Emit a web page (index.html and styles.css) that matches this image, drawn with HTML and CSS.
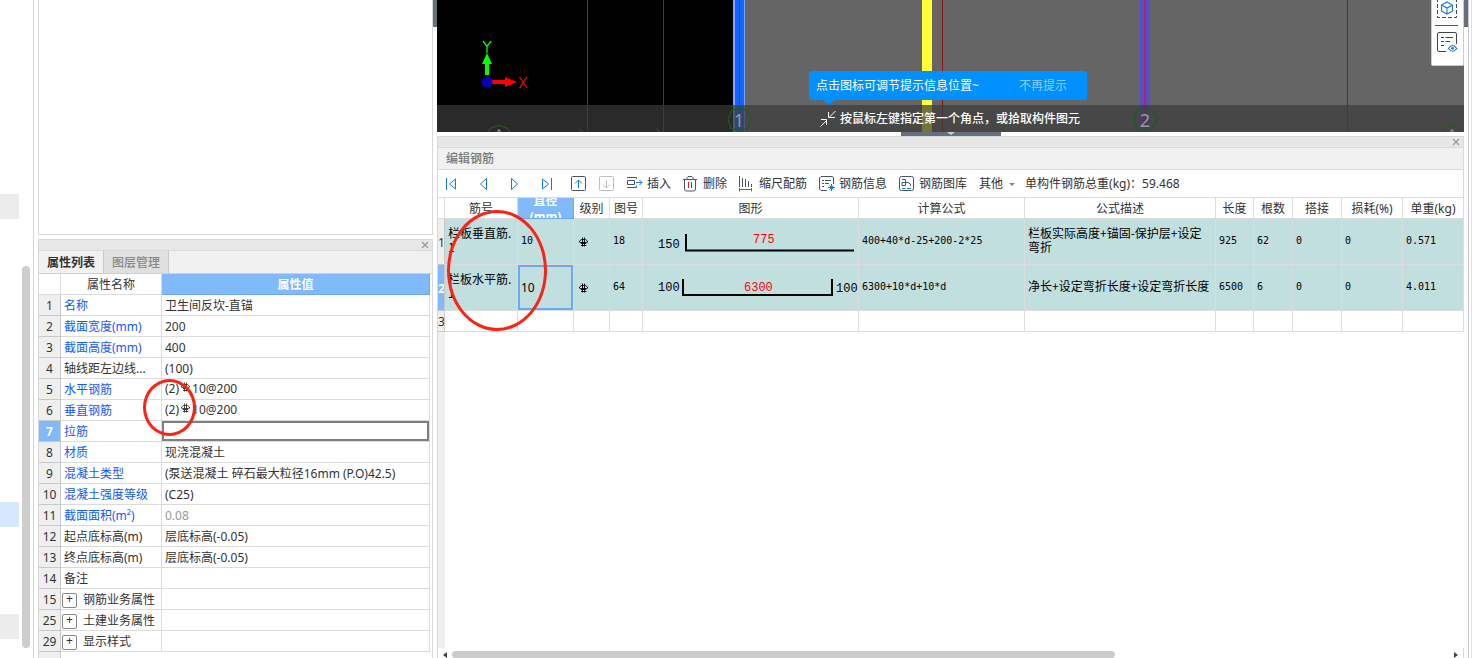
FILE: index.html
```html
<!DOCTYPE html>
<html lang="zh-CN">
<head>
<meta charset="utf-8">
<title>编辑钢筋</title>
<link rel="stylesheet" href="styles.css">
</head>
<body>
<svg class="defs" aria-hidden="true">
  <symbol id="rebar" viewBox="0 0 10 11"><path d="M3.500 0.500V9.500M5.500 0.500V9.500M2 8.500H7.500M1.500 5.500H7.500M2.500 2.500H6.500L8.500 4V5L7 6.500H2L0.500 5V4Z" fill="none" stroke="currentColor" stroke-width=".9"/></symbol>
  <symbol id="close" viewBox="0 0 8 8"><path d="M1 1L7 7M7 1L1 7" fill="none" stroke="currentColor" stroke-width="1.2"/></symbol>
</svg>

<aside class="gutter">
  <div class="tree"><i class="mark"></i><i class="mark active"></i><i class="mark"></i></div>
  <div class="vscroll"></div>
</aside>

<section class="side">
  <div class="blank-box"></div>
  <div class="dock props-dock">
    <div class="grip"><button class="close" aria-label="关闭"><svg><use href="#close"/></svg></button></div>
    <div class="tabs" role="tablist">
      <button class="tab selected" role="tab" aria-selected="true">属性列表</button>
      <button class="tab" role="tab" aria-selected="false">图层管理</button>
    </div>
    <div class="props-body">
      <table class="props">
        <colgroup><col class="p-num"><col class="p-name"><col></colgroup>
        <thead><tr><th class="corner"></th><th>属性名称</th><th class="hot">属性值</th></tr></thead>
        <tbody>
          <tr><th>1</th><td class="link">名称</td><td>卫生间反坎-直锚</td></tr>
          <tr><th>2</th><td class="link">截面宽度(mm)</td><td>200</td></tr>
          <tr><th>3</th><td class="link">截面高度(mm)</td><td>400</td></tr>
          <tr><th>4</th><td>轴线距左边线...</td><td>(100)</td></tr>
          <tr><th>5</th><td class="link">水平钢筋</td><td class="spec">(2)<svg class="rebar"><use href="#rebar"/></svg>10@200</td></tr>
          <tr><th>6</th><td class="link">垂直钢筋</td><td class="spec">(2)<svg class="rebar"><use href="#rebar"/></svg>10@200</td></tr>
          <tr class="current"><th>7</th><td class="link"><label for="tie">拉筋</label></td><td class="edit"><input id="tie" type="text" value=""></td></tr>
          <tr><th>8</th><td class="link">材质</td><td>现浇混凝土</td></tr>
          <tr><th>9</th><td class="link">混凝土类型</td><td>(泵送混凝土 碎石最大粒径16mm (P.O)42.5)</td></tr>
          <tr><th>10</th><td class="link">混凝土强度等级</td><td>(C25)</td></tr>
          <tr><th>11</th><td class="link">截面面积(m²)</td><td class="muted">0.08</td></tr>
          <tr><th>12</th><td>起点底标高(m)</td><td>层底标高(-0.05)</td></tr>
          <tr><th>13</th><td>终点底标高(m)</td><td>层底标高(-0.05)</td></tr>
          <tr><th>14</th><td>备注</td><td></td></tr>
          <tr><th>15</th><td class="group"><button class="expand">钢筋业务属性</button></td><td></td></tr>
          <tr><th>25</th><td class="group"><button class="expand">土建业务属性</button></td><td></td></tr>
          <tr><th>29</th><td class="group"><button class="expand">显示样式</button></td><td></td></tr>
        </tbody>
      </table>
    </div>
  </div>
</section>

<div class="splitter"></div>

<main class="work">
  <div class="canvas">
    <svg class="scene">
      <rect width="100%" height="132" fill="#000"/>
      <rect x="302" width="100%" height="132" fill="#656565"/>
      <g fill="#0a6a0a"><rect x="150" width="1" height="132"/><rect x="226" width="1" height="132"/></g>
      <rect x="296" width="12" height="132" fill="#7aa5ff"/>
      <rect x="298" width="9" height="132" fill="#1464ff"/>
      <rect x="302" width="1" height="132" fill="#c01048"/>
      <rect x="485" width="10" height="132" fill="#ffff33"/>
      <rect x="505" width="1" height="132" fill="#8c1414"/>
      <rect x="703" width="10" height="132" fill="#5050c8"/>
      <rect x="707" width="2" height="132" fill="#b42060"/>
      <rect x="910" width="1" height="132" fill="#6e2626"/>
      <path d="M50 75V62" stroke="#0f0" stroke-width="4"/>
      <path d="M50 53L55 64H45Z" fill="#0f0"/>
      <path d="M46 41L50 46.500L54 41M50 46V53" fill="none" stroke="#0f0" stroke-width="1.300"/>
      <path d="M54 82H68" stroke="#f00" stroke-width="4"/>
      <path d="M80 82L68 87V77Z" fill="#f00"/>
      <path d="M82.500 77L90 88M90 77L82.500 88" fill="none" stroke="#f00" stroke-width="1.300"/>
      <circle cx="50" cy="82" r="5.500" fill="#0000b4"/>
    </svg>
    <div class="hint">
      <svg class="axes">
        <g fill="none" stroke="#235823" stroke-width="1.200">
          <path d="M291 14.500L294.500 6L302.500 2.500L310.500 6L314.500 14.500L311 23L302.500 26.500L294 23Z"/>
          <path d="M697 14.500L700 6L708 2.500L716 6L720 14.500L716 23L708 26.500L700 23Z"/>
          <path d="M51 27L54 23L62 20.500L70 23L73 27M142 24L146 27M219 24L223 27M1005 27L1008 23L1015 20.500L1022 23L1025 27"/>
        </g>
        <g class="axis-name"><text x="302" y="22">1</text><text x="708" y="22">2</text></g>
        <path d="M61 27V25H63V27M1014 27V25H1016V27" stroke="#999" fill="none"/>
      </svg>
      <button class="hint-text"><svg viewBox="0 0 16 16"><path d="M15.500 0L9 6.500M8.500 1V6.500H15M.5 15.500L6.500 9.500M1 8.500H6.500V14" fill="none" stroke="#fff"/></svg>按鼠标左键指定第一个角点，或拾取构件图元</button>
    </div>
    <div class="tip"><span>点击图标可调节提示信息位置~</span><button>不再提示</button></div>
    <div class="palette">
      <button aria-label="三维"><svg viewBox="0 0 22 22"><path d="M1.500 0V19.500H20.500V0" fill="none" stroke="#3c4658" stroke-dasharray="4 2"/><path d="M11 4L16.500 7V13L11 16L5.500 13V7ZM5.500 7L11 10L16.500 7M11 10V16" fill="none" stroke="#1677e8" stroke-width="1.100"/></svg></button>
      <hr>
      <button aria-label="显示设置"><svg viewBox="0 0 22 22"><path d="M20.500 13V3Q20.500 1.500 19 1.500H3Q1.500 1.500 1.500 3V19Q1.500 20.500 3 20.500H10M5 6.500H8M9.500 6.500H17M5 10.500H8M9.500 10.500H14M5 14.500H8" fill="none" stroke="#3c4658" stroke-width="1"/><path d="M12.500 17.500Q16.500 11.500 20.800 17.500Q16.500 23 12.500 17.500Z" fill="none" stroke="#1677e8" stroke-width="1.200"/><circle cx="16.600" cy="17.300" r="1.400" fill="#1677e8"/></svg></button>
    </div>
  </div>
  <div class="handle-row"><i class="handle"></i></div>

  <section class="dock rebar-dock">
    <div class="grip"><button class="close" aria-label="关闭"><svg><use href="#close"/></svg></button></div>
    <h2>编辑钢筋</h2>
    <div class="toolbar">
      <div class="nav">
        <button aria-label="首行"><svg viewBox="0 0 16 16"><path d="M3.500 2V14M12.500 3V13L6.500 8Z"/></svg></button>
        <button aria-label="上一行"><svg viewBox="0 0 16 16"><path d="M11.500 2.500V13.500L5.500 8Z"/></svg></button>
        <button aria-label="下一行"><svg viewBox="0 0 16 16"><path d="M4.500 2.500V13.500L10.500 8Z"/></svg></button>
        <button aria-label="末行"><svg viewBox="0 0 16 16"><path d="M12.500 2V14M3.500 3V13L9.500 8Z"/></svg></button>
      </div>
      <div class="tools">
        <button aria-label="上移"><svg viewBox="0 0 16 16"><rect class="ink" x=".5" y=".5" width="14" height="14" rx="1"/><path d="M7.500 12V4M4 7.500L7.500 4L11 7.500"/></svg></button>
        <button aria-label="下移" disabled><svg viewBox="0 0 16 16"><rect class="off" x=".5" y=".5" width="14" height="14" rx="1"/><path class="off" d="M7.500 4V12M4 8.500L7.500 12L11 8.500"/></svg></button>
        <button><svg viewBox="0 0 16 16"><path class="ink" d="M0 1.500H9.500V3M0 11.500H9.500V9.500M.5 4.500H7.500V8.500H.5Z"/><path d="M9 6.500H15M12.500 4L15 6.500L12.500 9"/></svg>插入</button>
        <button><svg viewBox="0 0 16 16"><path class="ink" d="M0 3.500H14M4 3V1.500L5 .5H9L10 1.500V3M1.500 3.500V13Q1.500 15 3.500 15H10.500Q12.500 15 12.500 13V3.500"/><path class="warn" d="M5.500 6V12M8.500 6V12"/></svg>删除</button>
        <button><svg viewBox="0 0 16 16"><path class="ink" d="M.5 0V11M3.500 2V11M6.500 3V11M9.500 5V11M12.500 8V11"/><path d="M.5 12V15.500M12.500 12V15.500M.5 13.500H12.500"/></svg>缩尺配筋</button>
        <button><svg viewBox="0 0 16 16"><path class="ink" d="M14.500 8V2L13.500 .5H2L.5 2V13L2 14.500H8M3 4.500H5M6 4.500H12M3 7.500H5M6 7.500H10M3 10.500H5"/><path d="M12.500 8V15M9 11.500H16M10.500 9.500L14.500 13.500M14.500 9.500L10.500 13.500"/></svg>钢筋信息</button>
        <button><svg viewBox="0 0 16 16"><rect class="ink" x=".5" y=".5" width="14" height="14" rx="2"/><path class="ink" d="M3 3.500H6.500V9.500H3V6.500H9L11.500 8V10"/><path d="M3 12.500H6.500M8 12.500H12"/></svg>钢筋图库</button>
        <button class="more">其他<i class="caret"></i></button>
      </div>
      <span class="total">单构件钢筋总重(kg)：59.468</span>
    </div>
    <div class="grid-body">
      <table class="bars">
        <colgroup><col class="w7"><col class="w73"><col class="w56"><col class="w36"><col class="w33"><col class="w216"><col class="w166"><col><col class="w38"><col class="w39"><col class="w49"><col class="w61"><col class="w61"></colgroup>
        <thead><tr><th></th><th>筋号</th><th class="hot"><div class="two">直径<br>(mm)</div></th><th>级别</th><th>图号</th><th>图形</th><th>计算公式</th><th>公式描述</th><th>长度</th><th>根数</th><th>搭接</th><th>损耗(%)</th><th>单重(kg)</th></tr></thead>
        <tbody>
          <tr class="fill"><th>1</th><td class="cjk name">栏板垂直筋.<br>1</td><td>10</td><td><svg class="rebar"><use href="#rebar"/></svg></td><td>18</td>
            <td class="shape"><svg class="figure"><path d="M43 15V31.500H211" /><text x="15" y="29">150</text><text class="red" x="110" y="24">775</text></svg></td>
            <td>400+40*d-25+200-2*25</td><td class="cjk">栏板实际高度+锚固-保护层+设定弯折</td><td>925</td><td>62</td><td>0</td><td>0</td><td>0.571</td></tr>
          <tr class="fill current"><th>2</th><td class="cjk name">栏板水平筋.<br>1</td><td class="edit"><input type="text" value="10" aria-label="直径(mm)"></td><td><svg class="rebar"><use href="#rebar"/></svg></td><td>64</td>
            <td class="shape"><svg class="figure"><path d="M40 14V30H189V14"/><text x="15" y="26">100</text><text class="red" x="101" y="26">6300</text><text x="193" y="27">100</text></svg></td>
            <td>6300+10*d+10*d</td><td class="cjk">净长+设定弯折长度+设定弯折长度</td><td>6500</td><td>6</td><td>0</td><td>0</td><td>4.011</td></tr>
          <tr class="empty"><th>3</th><td></td><td></td><td></td><td></td><td></td><td></td><td></td><td></td><td></td><td></td><td></td><td></td></tr>
        </tbody>
      </table>
    </div>
    <div class="hscroll"><i class="arrow left"></i><div class="track"><i class="thumb"></i></div><i class="arrow right"></i></div>
  </section>
</main>

<div class="splitter edge"></div>
<div class="margin"></div>

<i class="ring ring-table"></i>
<i class="ring ring-props"></i>
</body>
</html>
```

FILE: styles.css
```css
* { box-sizing: border-box; }
html, body { height: 100%; }
body {
  margin: 0;
  display: flex;
  position: relative;
  overflow: hidden;
  background: #fff;
  color: #333;
  font: 12px/16px "Noto Sans", "Noto Sans CJK SC", sans-serif;
}
button, input { font: inherit; color: inherit; margin: 0; padding: 0; border: 0; background: none; border-radius: 0; }
table { border-collapse: separate; border-spacing: 0; table-layout: fixed; width: 100%; }
th { font-weight: normal; }
.defs { position: absolute; width: 0; height: 0; }
.rebar { width: 10px; height: 11px; }

/* left edge strip */
.gutter { flex: 0 0 34px; display: flex; gap: 3px; border-right: 1px solid #d4d4d4; }
.tree { width: 19px; }
.mark { display: block; height: 25px; background: #ececec; margin-top: 87px; }
.mark:first-child { margin-top: 194px; }
.mark.active { margin-top: 283px; background: #d5e8ff; }
.vscroll { width: 8px; height: 382px; margin-top: 266px; border-radius: 4px; background: #cdcdcd; }

/* property panel */
.side { flex: 0 0 395px; margin-left: 4px; display: flex; flex-direction: column; gap: 4px; }
.blank-box { flex: 0 0 235px; border: 1px solid #d9d9d9; border-top: 0; }
.dock { display: flex; flex-direction: column; border: 1px solid #d9d9d9; border-bottom: 0; min-height: 0; }
.props-dock { flex: 1; }
.grip { flex: none; height: 11px; background: #e7e7e7; border-bottom: 1px solid #d9d9d9; display: flex; justify-content: flex-end; align-items: center; padding-right: 3px; }
.close { display: flex; color: #999; }
.close svg { width: 8px; height: 8px; }
.tabs { display: flex; background: #f1f1f1; height: 23px; border-bottom: 1px solid #d0d0d4; }
.tab { width: 65px; padding-top: 2px; color: #888; font-weight: 500; background: #e0e0e0; border-right: 1px solid #c8c8cc; }
.tab.selected { color: #333; font-weight: bold; background: #f1f1f1; }
.props-body { flex: 1; padding-right: 2px; background: linear-gradient(to right, #efefef 21px, #c8c8c8 21px, #c8c8c8 22px, #fff 22px); }
.p-num { width: 22px; }
.p-name { width: 101px; }
.props th, .props td { height: 21px; padding: 2px 0 0; border-right: 1px solid #dcdcdc; border-bottom: 1px solid #dcdcdc; white-space: nowrap; background: #fff; }
.props td { padding-left: 3px; }
.props tbody th { background: #efefef; border-color: #c8c8c8; }
.props .corner { border-color: #dcdcdc; }
.props .hot, .bars .hot { background: #80bafa; border-color: #6aa9ee; color: #fff; font-weight: bold; }
.props .link { color: #1459ff; }
.props .muted { color: #999; }
.props .current th { background: #80bafa; color: #fff; font-weight: bold; }
.props .rebar { margin: 0 1px 0 2px; vertical-align: 0; }
.props .spec { padding-top: 0; }
.props .edit { padding: 0; }
.props .group { padding-left: 2px; }
.edit input { display: block; width: 100%; outline: 0; }
.props .edit input { height: 20px; border: 2px solid #7f7f7f; }
.expand { display: flex; align-items: center; gap: 6px; }
.expand::before { content: "+"; width: 13px; height: 13px; border: 1px solid #888; border-radius: 2px; line-height: 10px; font-size: 12px; }
.props .expand { margin-left: -1px; }

/* splitters */
.splitter { flex: 0 0 4px; background: linear-gradient(#66707d, #66707d) no-repeat 0 0 / 4px 27px; }
.margin { flex: 0 0 4px; border-left: 1px solid #c4c6cc; border-right: 1px solid #e0e0e0; }

/* drawing canvas */
.work { flex: 1; min-width: 0; display: flex; flex-direction: column; }
.canvas { flex: 0 0 132px; position: relative; overflow: hidden; }
.scene, .axes { position: absolute; inset: 0; width: 100%; height: 100%; }
.hint { position: absolute; left: 0; right: 0; bottom: 0; height: 27px; background: rgba(59, 59, 59, .71); display: flex; padding-left: 383px; }
.axis-name { fill: #999; font-size: 18px; text-anchor: middle; }
.hint-text { position: relative; display: flex; align-items: center; gap: 4px; color: #fff; font-weight: 500; }
.hint-text svg { width: 16px; height: 16px; }
.tip { position: absolute; left: 372px; top: 71px; width: 278px; height: 29px; border-radius: 3px; background: #0090ff; color: #fff; display: flex; align-items: center; justify-content: space-between; padding: 1px 20px 0 7px; }
.tip::after { content: ""; position: absolute; left: 14px; top: 29px; border: 6px solid transparent; border-top: 5px solid #0090ff; border-bottom: 0; }
.tip button { color: #8cccff; }
.palette { position: absolute; right: 0; top: 0; width: 33px; height: 66px; background: #fff; border: 1px solid #ccc; border-top: 0; border-radius: 0 0 2px 2px; display: flex; flex-direction: column; align-items: center; padding-right: 2px; }
.palette button, .palette svg { display: block; width: 22px; height: 22px; }
.palette button:first-child { margin-top: -2px; }
.palette hr { width: 23px; margin: 5px 0 5px; border: 0; border-top: 1px solid #555; }
.handle-row { flex: 0 0 4px; display: flex; justify-content: center; }
.handle { width: 100px; background: #66707d; display: flex; justify-content: center; }
.handle::after { content: ""; border: 4px solid transparent; border-top: 3px solid #ccd0d6; border-bottom: 0; }

/* rebar editor */
.rebar-dock { flex: 1; }
.rebar-dock h2 { margin: 0; height: 22px; padding: 3px 8px 0; font-size: 12px; font-weight: 500; color: #777; background: #f1f1f1; border-bottom: 1px solid #d9d9d9; }
.toolbar { height: 28px; display: flex; align-items: center; padding: 1px 0 0 5px; border-bottom: 1px solid #dcdcdc; white-space: nowrap; line-height: 18px; }
.nav, .tools { display: flex; gap: 16px; }
.tools { gap: 12px; margin: 0 10px 0 16px; }
.toolbar button { display: flex; align-items: center; gap: 4px; }
.toolbar svg { width: 16px; height: 16px; fill: none; stroke: #1677e8; }
.toolbar .ink { stroke: #4a5468; }
.toolbar .off { stroke: #bfbfbf; }
.toolbar .warn { stroke: #e02020; }
.caret { border: 3px solid transparent; border-top-color: #888; border-bottom: 0; }
.toolbar .more { gap: 6px; }
.grid-body { flex: 1; min-height: 0; margin-right: -1px; background: linear-gradient(to right, #efefef 7px, #fff 7px); }
.w7 { width: 7px; } .w33 { width: 33px; } .w36 { width: 36px; } .w38 { width: 38px; } .w39 { width: 39px; }
.w49 { width: 49px; } .w56 { width: 56px; } .w61 { width: 61px; } .w73 { width: 73px; } .w166 { width: 166px; } .w216 { width: 216px; }
.bars th, .bars td { height: 46px; padding: 0; border-right: 1px solid #dcdcdc; border-bottom: 1px solid #dcdcdc; overflow: hidden; background: #fff; }
.bars thead th, .bars .empty th, .bars .empty td { height: 21px; padding-top: 2px; white-space: nowrap; }
.bars thead .hot { padding: 0; }
.bars tbody th { padding-top: 2px; background: #efefef; border-color: #c8c8c8; }
.bars .current th { background: #80bafa; color: #fff; font-weight: bold; }
.bars td { padding: 0 3px 2px; color: #000; font: 10px/14px "DejaVu Sans Mono", monospace; }
.bars .fill td { background: #c2dfe0; }
.bars .fill .cjk { font: 12px/14px "Noto Sans CJK SC", sans-serif; padding-bottom: 4px; }
.bars .fill .name { padding-right: 0; white-space: nowrap; }
.bars .fill .cjk, .bars .rebar { vertical-align: middle; }
.bars td .rebar { margin: 3px 0 0 2px; }
.two { height: 20px; padding-top: 2px; display: flex; flex-direction: column; justify-content: center; overflow: hidden; }
.bars .fill .edit { padding: 0; }
.bars .edit input { height: 45px; padding-left: 1px; border: 2px solid #6aa9ee; font: 12px/16px "Noto Sans", sans-serif; }
.bars .fill .shape { padding: 0; }
.figure { display: block; width: 100%; height: 45px; font: 12px "Liberation Mono", monospace; }
.figure path { fill: none; stroke: #000; stroke-width: 2; }
.figure .red { fill: #f00; }
.hscroll { flex: 0 0 10px; display: flex; align-items: center; gap: 5px; padding: 3px 5px 0; }
.track { flex: 1; display: flex; height: 7px; }
.thumb { width: 66.5%; background: #cbcbcb; border-radius: 4px; }
.arrow { border: 3px solid transparent; }
.arrow.left { border-right: 4px solid #3c4658; border-left: 0; }
.arrow.right { border-left: 4px solid #3c4658; border-right: 0; }

/* hand-drawn marks over the panels */
.ring { position: absolute; border: 3px solid #fa2314; border-radius: 50%; pointer-events: none; }
.ring-table { left: 447px; top: 210px; width: 100px; height: 121px; }
.ring-props { left: 143px; top: 379px; width: 53px; height: 57px; }
```
